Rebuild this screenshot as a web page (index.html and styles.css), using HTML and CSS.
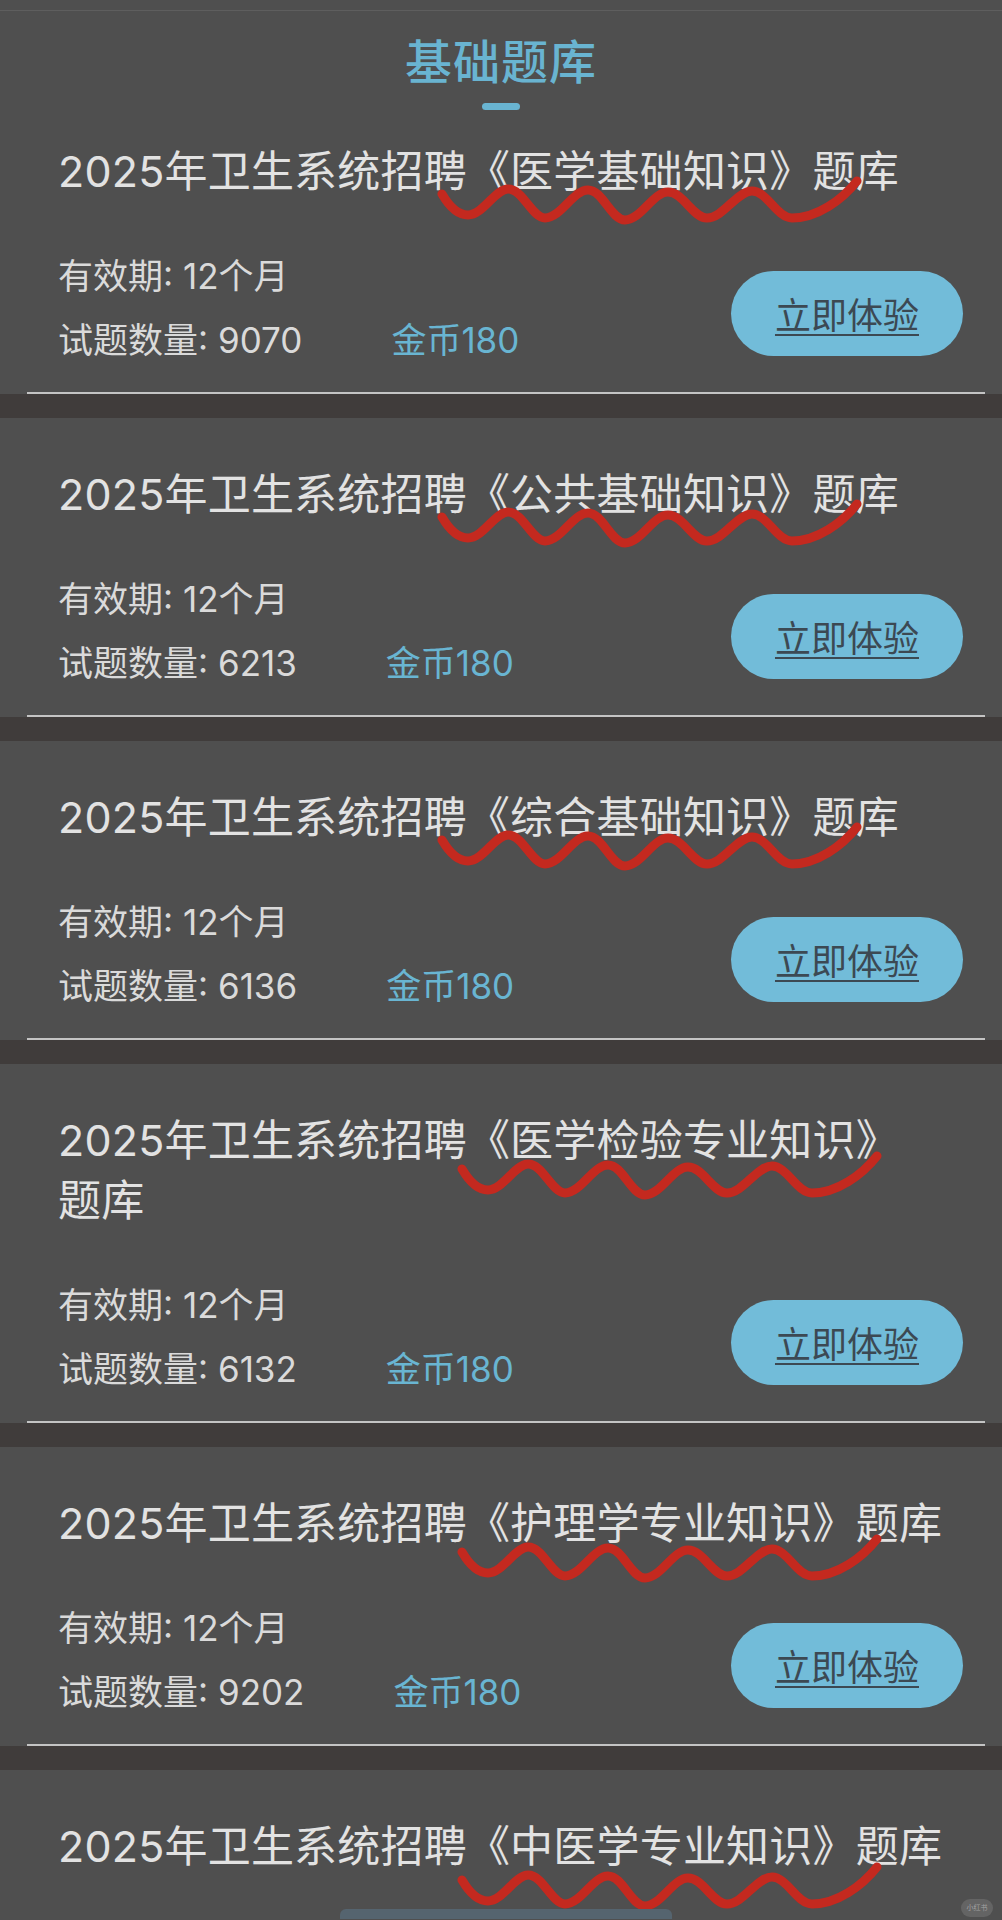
FILE: index.html
```html
<!DOCTYPE html>
<html lang="zh-CN">
<head>
    <meta charset="UTF-8">
    <meta name="viewport" content="width=device-width, initial-scale=1.0">
    <title>基础题库</title>
    <link rel="stylesheet" href="styles.css">
</head>
<body>
    <div class="page">
        <div class="topbar"></div>
        <header class="head">
            <h1>基础题库</h1>
            <span class="head-bar"></span>
        </header>

        <div class="bank first">
            <h2 class="bank-title">2025年卫生系统招聘《医学基础知识》<span class="nb">题库</span>
                <svg class="mark" viewBox="0 0 430 50"><path d="M5,16 C12,28 20,37 31,37 C46,37 58,11 71,11 C86,11 95,40 108,40 C124,40 136,12 151,12 C166,12 174,42 188,42 C204,42 216,14 231,14 C246,14 256,40 270,40 C286,40 300,13 315,13 C330,13 340,40 355,40 C380,40 405,22 420,3"/></svg>
            </h2>
            <div class="bank-row">
                <div class="bank-info">
                    <p>有效期: 12个月</p>
                    <p>试题数量: 9070<span class="coin">金币180</span></p>
                </div>
                <a class="try-btn">立即体验</a>
            </div>
            <div class="bank-line"></div>
        </div>

        <div class="bank">
            <h2 class="bank-title">2025年卫生系统招聘《公共基础知识》<span class="nb">题库</span>
                <svg class="mark" viewBox="0 0 430 50"><path d="M5,16 C12,28 20,37 31,37 C46,37 58,11 71,11 C86,11 95,40 108,40 C124,40 136,12 151,12 C166,12 174,42 188,42 C204,42 216,14 231,14 C246,14 256,40 270,40 C286,40 300,13 315,13 C330,13 340,40 355,40 C380,40 405,22 420,3"/></svg>
            </h2>
            <div class="bank-row">
                <div class="bank-info">
                    <p>有效期: 12个月</p>
                    <p>试题数量: 6213<span class="coin">金币180</span></p>
                </div>
                <a class="try-btn">立即体验</a>
            </div>
            <div class="bank-line"></div>
        </div>

        <div class="bank">
            <h2 class="bank-title">2025年卫生系统招聘《综合基础知识》<span class="nb">题库</span>
                <svg class="mark" viewBox="0 0 430 50"><path d="M5,16 C12,28 20,37 31,37 C46,37 58,11 71,11 C86,11 95,40 108,40 C124,40 136,12 151,12 C166,12 174,42 188,42 C204,42 216,14 231,14 C246,14 256,40 270,40 C286,40 300,13 315,13 C330,13 340,40 355,40 C380,40 405,22 420,3"/></svg>
            </h2>
            <div class="bank-row">
                <div class="bank-info">
                    <p>有效期: 12个月</p>
                    <p>试题数量: 6136<span class="coin">金币180</span></p>
                </div>
                <a class="try-btn">立即体验</a>
            </div>
            <div class="bank-line"></div>
        </div>

        <div class="bank">
            <h2 class="bank-title">2025年卫生系统招聘《医学检验专业知识》<span class="nb">题库</span>
                <svg class="mark wide" viewBox="0 0 430 50"><path d="M5,16 C12,28 20,37 31,37 C46,37 58,11 71,11 C86,11 95,40 108,40 C124,40 136,12 151,12 C166,12 174,42 188,42 C204,42 216,14 231,14 C246,14 256,40 270,40 C286,40 300,13 315,13 C330,13 340,40 355,40 C380,40 405,22 420,3"/></svg>
            </h2>
            <div class="bank-row">
                <div class="bank-info">
                    <p>有效期: 12个月</p>
                    <p>试题数量: 6132<span class="coin">金币180</span></p>
                </div>
                <a class="try-btn">立即体验</a>
            </div>
            <div class="bank-line"></div>
        </div>

        <div class="bank">
            <h2 class="bank-title">2025年卫生系统招聘《护理学专业知识》<span class="nb">题库</span>
                <svg class="mark wide" viewBox="0 0 430 50"><path d="M5,16 C12,28 20,37 31,37 C46,37 58,11 71,11 C86,11 95,40 108,40 C124,40 136,12 151,12 C166,12 174,42 188,42 C204,42 216,14 231,14 C246,14 256,40 270,40 C286,40 300,13 315,13 C330,13 340,40 355,40 C380,40 405,22 420,3"/></svg>
            </h2>
            <div class="bank-row">
                <div class="bank-info">
                    <p>有效期: 12个月</p>
                    <p>试题数量: 9202<span class="coin">金币180</span></p>
                </div>
                <a class="try-btn">立即体验</a>
            </div>
            <div class="bank-line"></div>
        </div>

        <div class="bank last">
            <h2 class="bank-title">2025年卫生系统招聘《中医学专业知识》<span class="nb">题库</span>
                <svg class="mark wide low" viewBox="0 0 430 50"><path d="M5,16 C12,28 20,37 31,37 C46,37 58,11 71,11 C86,11 95,40 108,40 C124,40 136,12 151,12 C166,12 174,42 188,42 C204,42 216,14 231,14 C246,14 256,40 270,40 C286,40 300,13 315,13 C330,13 340,40 355,40 C380,40 405,22 420,3"/></svg>
            </h2>
            <span class="peek"></span>
        </div>

        <span class="watermark">小红书</span>
    </div>
</body>
</html>
```

FILE: styles.css
```css
body {
    margin: 0;
    padding: 0;
    background-color: #4f4f4f;
    font-family: "Inter", "Noto Sans CJK SC", sans-serif;
}
.page {
    position: relative;
    width: 1002px;
    height: 1920px;
    overflow: hidden;
}
.topbar {
    height: 10px;
    border-bottom: 1px solid #5e5e5e;
}
.head {
    display: flex;
    flex-direction: column;
    align-items: center;
}
.head h1 {
    margin: 21px 0 0;
    font-size: 47px;
    line-height: 60px;
    font-weight: 500;
    letter-spacing: 1px;
    color: #69b4d1;
}
.head-bar {
    width: 38px;
    height: 7px;
    margin-top: 11px;
    border-radius: 4px;
    background: #69b4d1;
}
.bank {
    position: relative;
    padding: 46px 39px 0 58px;
    border-bottom: 24px solid #403c3b;
}
.bank.first {
    padding-top: 31px;
}
.bank.last {
    min-height: 300px;
    border-bottom: 0;
}
.bank-title {
    position: relative;
    margin: 0;
    font-size: 43px;
    line-height: 60px;
    font-weight: 400;
    letter-spacing: 0.2px;
    color: #e2e2e2;
}
.nb {
    white-space: nowrap;
}
.mark {
    position: absolute;
    left: 379px;
    top: 37px;
    width: 430px;
    height: 50px;
    overflow: visible;
}
.mark path {
    fill: none;
    stroke: #c4291f;
    stroke-width: 9;
    stroke-linecap: round;
    stroke-linejoin: round;
}
.mark.wide {
    left: 399px;
    top: 43px;
}
.mark.low {
    top: 48px;
}
.bank-row {
    display: flex;
    justify-content: space-between;
    align-items: center;
    margin-top: 43px;
}
.bank-info p {
    margin: 0;
    font-size: 35px;
    line-height: 64px;
    color: #dadada;
}
.coin {
    margin-left: 89px;
    color: #69b5d2;
}
.try-btn {
    display: flex;
    align-items: center;
    justify-content: center;
    width: 232px;
    height: 85px;
    margin-top: 10px;
    border-radius: 43px;
    background: #72bcd9;
    color: #3c4953;
    font-size: 36px;
    text-decoration: underline;
    text-decoration-thickness: 2px;
    text-underline-offset: 5px;
    cursor: pointer;
}
.bank-line {
    height: 2px;
    margin: 20px -22px 0 -31px;
    background: #c4c4c4;
}
.peek {
    position: absolute;
    left: 340px;
    top: 139px;
    width: 332px;
    height: 10px;
    border-radius: 6px 6px 0 0;
    background: #55646f;
}
.watermark {
    position: absolute;
    left: 961px;
    top: 1899px;
    width: 32px;
    height: 18px;
    border-radius: 9px;
    background: rgba(255, 255, 255, 0.12);
    color: rgba(255, 255, 255, 0.4);
    font-size: 7px;
    line-height: 18px;
    text-align: center;
}
```
